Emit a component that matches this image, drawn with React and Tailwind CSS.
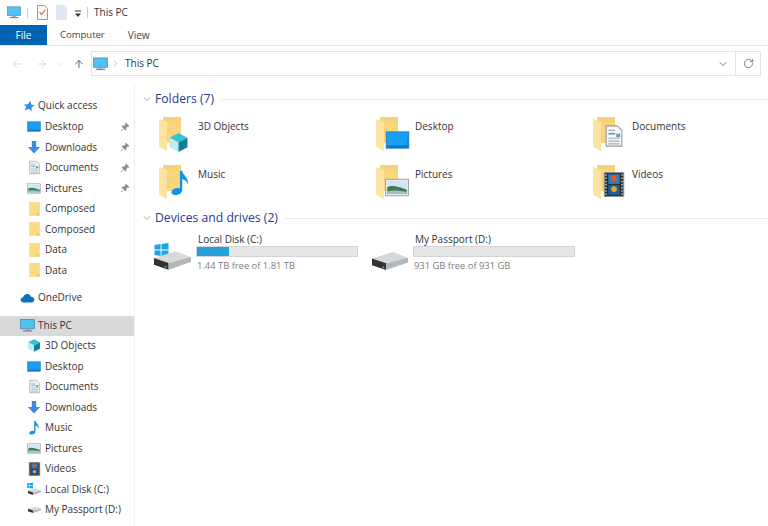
import { ArrowLeft, ArrowRight, ArrowUp, ChevronDown, ChevronRight, RotateCw } from 'lucide-react';

const MonitorIcon = ({ className }) => (
  <svg viewBox="0 0 16 14" className={className}>
    <rect x="0.5" y="0.5" width="15" height="10" fill="#5fb8ee" stroke="#4a7fa5" strokeWidth="0.7" />
    <rect x="1.5" y="1.5" width="13" height="8" fill="#4cc2f5" />
    <rect x="6" y="10.5" width="4" height="1.5" fill="#9aa4ac" />
    <rect x="3" y="12" width="10" height="1.5" fill="#7f8a94" />
  </svg>
);

const DesktopIcon = ({ className }) => (
  <svg viewBox="0 0 24 18" className={className}>
    <rect x="0.5" y="0.5" width="23" height="17" fill="#0d84d8" stroke="#5a9fd0" strokeWidth="0.6" />
    <path d="M1.5 1.5H22.5L21 14H1.5Z" fill="#19a0f5" />
    <rect x="1" y="15.5" width="22" height="1.5" fill="#1476b8" />
  </svg>
);

const DownIcon = ({ className }) => (
  <svg viewBox="0 0 16 16" className={className}>
    <path d="M5.5 1H10.5V8H15L8 15.5L1 8H5.5Z" fill="#3c8be0" />
  </svg>
);

const DocIcon = ({ className }) => (
  <svg viewBox="0 0 16 20" className={className}>
    <path d="M1 1H11L15 5V19H1Z" fill="#f4f5f6" stroke="#9b9ea1" />
    <path d="M3 5H9M3 12H13M3 14.5H13M3 17H13" stroke="#a9adb1" strokeWidth="1" />
    <path d="M3 8H9" stroke="#4aa6e0" strokeWidth="1.5" />
    <rect x="10" y="8" width="3.5" height="3" fill="#6f9bb5" />
  </svg>
);

const PictureIcon = ({ className }) => (
  <svg viewBox="0 0 22 16" className={className}>
    <rect x="0.5" y="0.5" width="21" height="15" fill="#eceef0" stroke="#a4a8ab" />
    <rect x="2" y="2" width="18" height="12" fill="#cfe6f5" />
    <path d="M2 8C6 5.5 11 7 20 10V14H2Z" fill="#3f7a58" />
    <path d="M2 11.5C8 10 14 11 20 12V14H2Z" fill="#9fc0c9" />
  </svg>
);

const FilmIcon = ({ className }) => (
  <svg viewBox="0 0 18 22" className={className}>
    <rect x="0.5" y="0.5" width="17" height="21" fill="#2a2d30" stroke="#8f9295" />
    <rect x="4" y="2" width="10" height="8.5" fill="#2b7fc4" />
    <rect x="4" y="11.5" width="10" height="8.5" fill="#1f5f9c" />
    <circle cx="9" cy="5.5" r="2.5" fill="#e2582a" />
    <circle cx="9" cy="15" r="2.5" fill="#e8a12a" />
    <path d="M2 2V20M16 2V20" stroke="#d0d3d6" strokeWidth="1.2" strokeDasharray="1.4 1.4" />
  </svg>
);

const NoteIcon = ({ className }) => (
  <svg viewBox="0 0 16 22" className={className}>
    <path d="M7.5 1H9.5C10 5 15 6.5 14.5 13C13.5 10 11.5 8.5 9.5 8V17C9.5 20 6.5 21.5 3.5 21.5C1 21.5 0 20 0.5 18.5C1 16.5 4.5 15 7.5 16Z" fill="#0f95e8" />
  </svg>
);

const CubeIcon = ({ className }) => (
  <svg viewBox="0 0 20 20" className={className}>
    <path d="M10 1L18.5 5.5L10 10L1.5 5.5Z" fill="#35c3d6" />
    <path d="M1.5 5.5L10 10V19L1.5 14.5Z" fill="#bfecf0" />
    <path d="M18.5 5.5L10 10V19L18.5 14.5Z" fill="#0f7f9e" />
  </svg>
);

const StarIcon = ({ className }) => (
  <svg viewBox="0 0 16 16" className={className}>
    <path d="M10 1L11 6L15.5 7L11.5 9.5L11.5 15L8 11.5L2 14L4.5 9L1 6L6.5 5.5Z" fill="#2f8fe0" />
  </svg>
);

const PinIcon = ({ className }) => (
  <svg viewBox="0 0 12 12" className={className}>
    <path d="M7 0.5L11.5 5L10.5 5.8L9.5 5.2L7.5 7.4L7.6 9.4L6.6 10.2L1.8 5.4L2.6 4.4L4.6 4.5L6.8 2.5L6.2 1.5Z" fill="#8b8e91" />
    <path d="M3.8 8.2L1 11" stroke="#8b8e91" strokeWidth="1" />
  </svg>
);

const SmallFolder = ({ className }) => (
  <svg viewBox="0 0 12 16" className={className}>
    <rect x="0.5" y="0.5" width="11" height="15" fill="#fbdc85" stroke="#f0cf7c" strokeWidth="0.6" />
    <path d="M8.5 12.5H11.5V15.5H8.5Z" fill="#f1c95f" />
  </svg>
);

const CloudIcon = ({ className }) => (
  <svg viewBox="0 0 16 11" className={className}>
    <path d="M4 10.5C1.5 10.5 0.2 9 0.5 7.2C0.8 5.6 2 5 3 5C3.6 2.6 5.6 0.8 8 1C10 1.2 11.3 2.4 11.8 4C14 4 15.8 5.6 15.5 7.8C15.3 9.5 14 10.5 12.5 10.5Z" fill="#0f6cbd" />
  </svg>
);

const DriveIcon = ({ className }) => (
  <svg viewBox="0 0 38 20" className={className}>
    <path d="M0 8L22 1L38 7L15 13Z" fill="#d6d8da" />
    <path d="M0 8L15 13V20L0 15Z" fill="#2f3236" />
    <path d="M15 13L38 7V12L15 20Z" fill="#b4b7ba" />
    <circle cx="12" cy="17" r="1" fill="#3fd15c" />
  </svg>
);

const WinLogo = ({ className }) => (
  <svg viewBox="0 0 16 16" className={className}>
    <path d="M0 2.2L7 1.2V7.5H0ZM8 1L16 0V7.5H8ZM0 8.5H7V14.8L0 13.8ZM8 8.5H16V16L8 15Z" fill="#19a5e8" />
  </svg>
);

const BigFolder = ({ overlay }) => (
  <div className="relative w-[34px] h-[38px] shrink-0">
    <svg viewBox="0 0 24 34" className="w-[24px] h-[34px] ml-[1px] mt-[1px]">
      <path d="M4 0H22V26H4Z" fill="#f5d27a" />
      <path d="M0 2L8 5V34L0 30Z" fill="#fce3a0" />
      <path d="M8 5H22V26H8Z" fill="#f7d67c" />
    </svg>
    {overlay}
  </div>
);

const LOCATIONS = [
  { name: '3D Objects', overlay: <CubeIcon className="absolute left-[10px] top-[16px] w-[21px] h-[21px]" /> },
  { name: 'Desktop', overlay: <DesktopIcon className="absolute left-[10px] top-[15px] w-[25px] h-[18px]" /> },
  { name: 'Documents', overlay: <DocIcon className="absolute left-[13px] top-[8px] w-[18px] h-[24px]" /> },
  { name: 'Music', overlay: <NoteIcon className="absolute left-[13px] top-[4px] w-[19px] h-[29px]" /> },
  { name: 'Pictures', overlay: <PictureIcon className="absolute left-[10px] top-[14px] w-[24px] h-[19px]" /> },
  { name: 'Videos', overlay: <FilmIcon className="absolute left-[11px] top-[8px] w-[22px] h-[25px]" /> },
];

const pinned = [
  { name: 'Desktop', icon: <DesktopIcon className="w-[14px] h-[11px]" />, pin: true },
  { name: 'Downloads', icon: <DownIcon className="w-[14px] h-[14px]" />, pin: true },
  { name: 'Documents', icon: <DocIcon className="w-[11px] h-[15px]" />, pin: true },
  { name: 'Pictures', icon: <PictureIcon className="w-[14px] h-[11px]" />, pin: true },
  { name: 'Composed', icon: <SmallFolder className="w-[11px] h-[14px]" /> },
  { name: 'Composed', icon: <SmallFolder className="w-[11px] h-[14px]" /> },
  { name: 'Data', icon: <SmallFolder className="w-[11px] h-[14px]" /> },
  { name: 'Data', icon: <SmallFolder className="w-[11px] h-[14px]" /> },
];

const pcItems = [
  { name: '3D Objects', icon: <CubeIcon className="w-[15px] h-[15px]" /> },
  { name: 'Desktop', icon: <DesktopIcon className="w-[14px] h-[11px]" /> },
  { name: 'Documents', icon: <DocIcon className="w-[11px] h-[15px]" /> },
  { name: 'Downloads', icon: <DownIcon className="w-[14px] h-[14px]" /> },
  { name: 'Music', icon: <NoteIcon className="w-[11px] h-[15px]" /> },
  { name: 'Pictures', icon: <PictureIcon className="w-[14px] h-[11px]" /> },
  { name: 'Videos', icon: <FilmIcon className="w-[13px] h-[14px]" /> },
  {
    name: 'Local Disk (C:)',
    icon: (
      <span className="relative w-[14px] h-[14px]">
        <WinLogo className="absolute left-0 top-0 w-[6px] h-[7px]" />
        <DriveIcon className="absolute left-[1px] top-[6px] w-[13px] h-[7px]" />
      </span>
    ),
  },
  { name: 'My Passport (D:)', icon: <DriveIcon className="w-[13px] h-[7px]" /> },
];

const NavRow = ({ item }) => (
  <div className="flex items-center h-[20.5px] pl-[27px] pr-[4px]">
    <span className="w-[14px] flex justify-center shrink-0">{item.icon}</span>
    <span className="ml-[4px] flex-1 text-[#333]">{item.name}</span>
    {item.pin && <PinIcon className="w-[10px] h-[10px]" />}
  </div>
);

const SectionHeader = ({ title, className }) => (
  <div className={`flex items-center h-[16px] ${className}`}>
    <ChevronDown size={12} strokeWidth={1.2} className="text-[#777] ml-[6px]" />
    <span className="ml-[2px] text-[12.2px] text-[#27398f] whitespace-nowrap">{title}</span>
    <div className="ml-[7px] flex-1 h-px bg-[#e8e8e8]" />
  </div>
);

const Drive = ({ name, free, used, icon }) => (
  <div className="flex">
    <div className="relative w-[42px] h-[40px] shrink-0 mt-[2px]">{icon}</div>
    <div className="ml-[1px]">
      <div className="h-[12px] leading-[12px] pl-[2px] text-[#333]">{name}</div>
      <div className="w-[162px] h-[11px] mt-[1px] bg-[#e6e6e6] border border-[#d4d4d4]">
        {used > 0 && <div className="h-full bg-[#26a0da]" style={{ width: `${used}%` }} />}
      </div>
      <div className="mt-[2px] leading-[13px] pl-[1px] text-[9.4px] text-[#7c7c7c]">{free}</div>
    </div>
  </div>
);

export default function App() {
  return (
    <div className="w-[768px] h-[526px] overflow-hidden bg-white text-[10px] flex flex-col" style={{ fontFamily: '"Open Sans", sans-serif' }}>
      {/* title bar */}
      <div className="h-[25px] flex items-center shrink-0 pl-[7px]">
        <MonitorIcon className="w-[14px] h-[13px]" />
        <div className="ml-[6px] w-px h-[10px] bg-[#ccc]" />
        <svg viewBox="0 0 11 15" className="ml-[9px] w-[11px] h-[15px]">
          <path d="M0.5 0.5H7.5L10.5 3.5V14.5H0.5Z" fill="#fbfbfb" stroke="#999" />
          <path d="M2.5 7L4.5 9.5L8.5 4.5" fill="none" stroke="#e2683c" strokeWidth="1.2" />
        </svg>
        <svg viewBox="0 0 11 15" className="ml-[8px] w-[11px] h-[15px]">
          <path d="M0 0H8L11 3V15H0Z" fill="#dfe7f4" />
        </svg>
        <svg viewBox="0 0 8 8" className="ml-[7px] w-[8px] h-[8px] mt-[3px]">
          <path d="M1 1H7" stroke="#333" strokeWidth="1" />
          <path d="M1 3.5H7L4 7Z" fill="#333" />
        </svg>
        <div className="ml-[5px] w-px h-[11px] bg-[#ccc]" />
        <span className="ml-[6px] text-[#333]">This PC</span>
      </div>

      {/* ribbon tabs */}
      <div className="h-[21px] flex items-stretch shrink-0 border-b border-[#e3e3e3]">
        <div className="w-[47px] flex items-center justify-center bg-[#0063b1] text-white">File</div>
        <div className="ml-[13px] flex items-center text-[9.5px] text-[#444]">Computer</div>
        <div className="ml-[23px] flex items-center text-[#444]">View</div>
      </div>

      {/* address bar */}
      <div className="h-[25px] mt-[5px] flex items-center shrink-0 pr-[7px]">
        <div className="w-[91px] flex items-center shrink-0 pl-[11px]">
          <ArrowLeft size={12} strokeWidth={1.4} className="text-[#c8c8c8]" />
          <ArrowRight size={12} strokeWidth={1.4} className="ml-[13px] text-[#c8c8c8]" />
          <ChevronDown size={8} strokeWidth={1.4} className="ml-[9px] text-[#c8c8c8]" />
          <ArrowUp size={12} strokeWidth={1.8} className="ml-[8px] text-[#555]" />
        </div>
        <div className="flex-1 h-full flex items-center border border-[#e3e3e3] pl-[1px]">
          <MonitorIcon className="w-[15px] h-[14px]" />
          <ChevronRight size={9} strokeWidth={1.4} className="ml-[3px] text-[#777]" />
          <span className="ml-[5px] text-[#333]">This PC</span>
          <ChevronDown size={12} strokeWidth={2} className="ml-auto mr-[6px] text-[#777]" />
          <div className="w-[25px] h-full flex items-center justify-center border-l border-[#e3e3e3]">
            <RotateCw size={11} strokeWidth={1.8} className="text-[#666]" />
          </div>
        </div>
      </div>

      {/* body */}
      <div className="flex-1 flex min-h-0 mt-[7px]">
        <div className="w-[135px] shrink-0 border-r border-[#f0f0f0] pt-[12px]">
          <div className="flex items-center h-[21.5px] pl-[23px]">
            <StarIcon className="w-[12px] h-[12px]" />
            <span className="ml-[3px] text-[#333]">Quick access</span>
          </div>
          {pinned.map((item, i) => <NavRow key={i} item={item} />)}
          <div className="flex items-center h-[20px] pl-[20px] mt-[7px]">
            <CloudIcon className="w-[15px] h-[10px]" />
            <span className="ml-[3px] text-[#333]">OneDrive</span>
          </div>
          <div className="flex items-center h-[20px] pl-[20px] mt-[8px] bg-[#d9d9d9] w-[134px]">
            <MonitorIcon className="w-[15px] h-[13px]" />
            <span className="ml-[3px] text-[#333]">This PC</span>
          </div>
          {pcItems.map((item) => <NavRow key={item.name} item={item} />)}
        </div>

        <div className="flex-1 min-w-0 pt-[8px]">
          <SectionHeader title="Folders (7)" />
          <div className="grid grid-cols-[217px_217px_1fr] auto-rows-[48px] pl-[23px] mt-[9px]">
            {LOCATIONS.map((loc) => (
              <div key={loc.name} className="flex">
                <BigFolder overlay={loc.overlay} />
                <span className="ml-[6px] mt-[3px] leading-[14px] text-[#333]">{loc.name}</span>
              </div>
            ))}
          </div>
          <SectionHeader title="Devices and drives (2)" className="mt-[-2px]" />
          <div className="flex pl-[18px] mt-[7px]">
            <div className="w-[217px]">
              <Drive
                name="Local Disk (C:)"
                free="1.44 TB free of 1.81 TB"
                used={20}
                icon={
                  <>
                    <WinLogo className="absolute left-[1px] top-[8px] w-[15px] h-[14px]" />
                    <DriveIcon className="absolute left-[1px] top-[15px] w-[37px] h-[20px]" />
                  </>
                }
              />
            </div>
            <Drive
              name="My Passport (D:)"
              free="931 GB free of 931 GB"
              used={0}
              icon={<DriveIcon className="absolute left-[2px] top-[16px] w-[36px] h-[19px]" />}
            />
          </div>
        </div>
      </div>
    </div>
  );
}
